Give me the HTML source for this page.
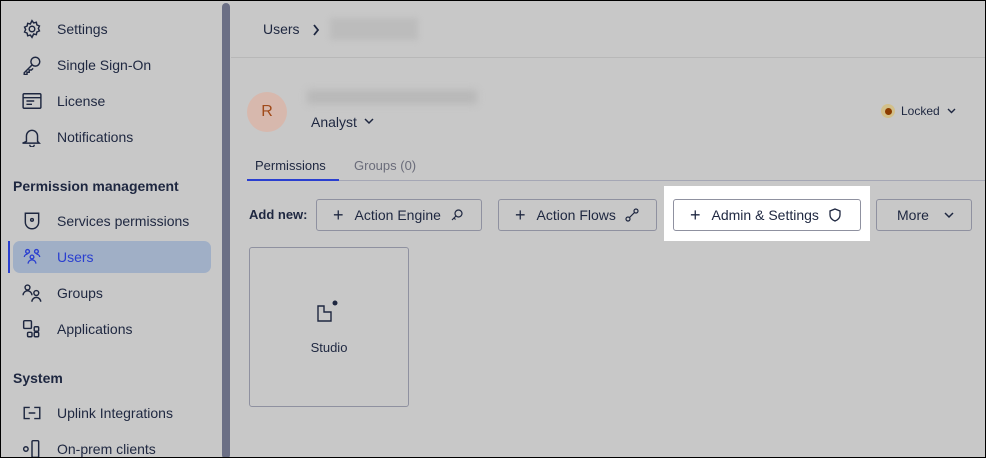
<!DOCTYPE html>
<html><head><style>
*{box-sizing:border-box;margin:0;padding:0}
body{width:986px;height:458px;background:#000;font-family:"Liberation Sans",sans-serif;color:#1e2740;overflow:hidden;position:relative}
.frame{position:absolute;left:1px;top:1px;width:984px;height:456px;background:#c8c8c8;overflow:hidden}
.side{position:absolute;left:0;top:0;width:221px;height:456px}
.item{position:absolute;left:12px;width:198px;height:32px;display:flex;align-items:center;font-size:14px;color:#1e2740}
.item svg{position:absolute;left:9px;top:6px}
.item span{position:absolute;left:44px}
.sec{position:absolute;left:12px;font-size:14px;font-weight:bold;color:#1e2740}
.scroll{position:absolute;left:221px;top:2px;width:8px;height:456px;background:#6b6f85;border-radius:4px}
.hdr{position:absolute;left:230px;top:0;right:0;height:57px;border-bottom:1px solid #b8b8b8}
.btn{position:absolute;top:198px;height:32px;border:1px solid #8f91a0;border-radius:3px;font-size:14px;display:flex;align-items:center;color:#1e2740}
</style></head><body><div class="frame">
<div class="side">
<div class="item" style="top:12px"><svg width="20" height="20" viewBox="0 0 18 18" fill="none" stroke="#1e2740" stroke-width="1.3"><circle cx="9" cy="9" r="2.5"/><path d="M9 1.5l1.5 2 2.4-.6.5 2.4 2.3 1-1 2.2 1 2.2-2.3 1-.5 2.4-2.4-.6L9 16.5l-1.5-2-2.4.6-.5-2.4-2.3-1 1-2.2-1-2.2 2.3-1 .5-2.4 2.4.6z"/></svg><span>Settings</span></div>
<div class="item" style="top:48px"><svg width="20" height="20" viewBox="0 0 18 18" fill="none" stroke="#1e2740" stroke-width="1.3"><circle cx="12" cy="6" r="4"/><path d="M9 9l-7 7v1.5h2.5v-2h2v-2h2l1.5-1.5"/></svg><span>Single Sign-On</span></div>
<div class="item" style="top:84px"><svg width="20" height="20" viewBox="0 0 18 18" fill="none" stroke="#1e2740" stroke-width="1.3"><rect x="1" y="2.5" width="16" height="13" rx="1"/><path d="M1 6h16M4 9h7M4 12h5"/></svg><span>License</span></div>
<div class="item" style="top:120px"><svg width="20" height="20" viewBox="0 0 18 18" fill="none" stroke="#1e2740" stroke-width="1.3"><path d="M4 13V8a5 5 0 0110 0v5l1.5 1.5h-15zM7 16a2 2 0 004 0"/></svg><span>Notifications</span></div>
<div class="sec" style="top:177px">Permission management</div>
<div class="item" style="top:204px"><svg width="20" height="20" viewBox="0 0 18 18" fill="none" stroke="#1e2740" stroke-width="1.3"><path d="M3 2h12v8a6 6 0 01-12 0z"/><circle cx="9" cy="8" r="1.2"/></svg><span>Services permissions</span></div>
<div style="position:absolute;left:7px;top:240px;width:2px;height:32px;background:#2a3fd0"></div>
<div class="item" style="top:240px;background:#a0afc6;border-radius:7px;color:#2a3fd0"><svg width="20" height="20" viewBox="0 0 18 18" fill="none" stroke="#2a3fd0" stroke-width="1.2"><circle cx="5" cy="4" r="1.7"/><circle cx="13" cy="4" r="1.7"/><circle cx="9" cy="9" r="1.7"/><path d="M2 9a3 3 0 013-2.5M16 9a3 3 0 00-3-2.5M5.5 15a3.5 3.5 0 017 0"/></svg><span>Users</span></div>
<div class="item" style="top:276px"><svg width="22" height="20" viewBox="0 0 20 18" fill="none" stroke="#1e2740" stroke-width="1.3"><circle cx="5" cy="4" r="2.2"/><circle cx="13" cy="9" r="2.2"/><path d="M1 11a4 4 0 018 0M9 17a4 4 0 018 0"/></svg><span>Groups</span></div>
<div class="item" style="top:312px"><svg width="20" height="20" viewBox="0 0 18 18" fill="none" stroke="#1e2740" stroke-width="1.3"><rect x="1.5" y="1.5" width="7" height="7" rx="1"/><rect x="11" y="7" width="4" height="4" rx="1"/><rect x="5" y="12" width="4" height="4" rx="1"/><rect x="11" y="12" width="4" height="4" rx="1"/></svg><span>Applications</span></div>
<div class="sec" style="top:369px">System</div>
<div class="item" style="top:396px"><svg width="20" height="20" viewBox="0 0 18 18" fill="none" stroke="#1e2740" stroke-width="1.3"><path d="M7 4H2v10h5M11 4h5v10h-5M6 9h6"/></svg><span>Uplink Integrations</span></div>
<div class="item" style="top:432px"><svg width="20" height="20" viewBox="0 0 18 18" fill="none" stroke="#1e2740" stroke-width="1.3"><circle cx="3.5" cy="9" r="2"/><rect x="9" y="1.5" width="6" height="15" rx="1"/></svg><span>On-prem clients</span></div>
</div>
<div class="scroll"></div>
<div class="hdr"><span style="position:absolute;left:32px;top:20px;font-size:14px">Users</span><svg style="position:absolute;left:81px;top:23px" width="8" height="12" viewBox="0 0 8 12" fill="none" stroke="#1e2740" stroke-width="1.8"><path d="M2 1l4 5-4 5"/></svg><div style="position:absolute;left:99px;top:17px;width:88px;height:22px;background:#bcbcbc;filter:blur(3px)"></div></div>
<div style="position:absolute;left:246px;top:91px;width:40px;height:40px;border-radius:50%;background:#d7b8ad;color:#a04a1a;font-size:16px;display:flex;align-items:center;justify-content:center">R</div>
<div style="position:absolute;left:306px;top:89px;width:170px;height:14px;background:#b8b8b8;filter:blur(4px)"></div>
<div style="position:absolute;left:310px;top:113px;font-size:14px">Analyst</div>
<svg style="position:absolute;left:363px;top:117px" width="10" height="7" viewBox="0 0 10 7" fill="none" stroke="#1e2740" stroke-width="1.5"><path d="M1 1l4 4 4-4"/></svg>
<div style="position:absolute;left:880px;top:103px;width:14px;height:14px;border-radius:50%;background:#d2c08a"></div>
<div style="position:absolute;left:884px;top:107px;width:7px;height:7px;border-radius:50%;background:#8c3c00"></div>
<div style="position:absolute;left:900px;top:103px;font-size:12px">Locked</div>
<svg style="position:absolute;left:946px;top:107px" width="9" height="6" viewBox="0 0 9 6" fill="none" stroke="#1e2740" stroke-width="1.4"><path d="M1 1l3.5 3.5L8 1"/></svg>
<div style="position:absolute;left:254px;top:157px;font-size:13px">Permissions</div>
<div style="position:absolute;left:353px;top:157px;font-size:13px;color:#6a6c7a">Groups (0)</div>
<div style="position:absolute;left:246px;top:179px;width:738px;height:1px;background:#a5a7b5"></div>
<div style="position:absolute;left:246px;top:178px;width:92px;height:2px;background:#2a3fd0"></div>
<div style="position:absolute;left:248px;top:206px;font-size:13px;font-weight:bold">Add new:</div>
<div class="btn" style="left:315px;width:166px"><span style="margin-left:16px;font-size:18px">+</span><span style="margin-left:11px">Action Engine</span><svg style="margin-left:9px" width="14" height="14" viewBox="0 0 14 14" fill="none" stroke="#1e2740" stroke-width="1.2"><circle cx="8.5" cy="5.5" r="3.5"/><path d="M6 8l-4 4M4 10l1.5 1.5"/></svg></div>
<div class="btn" style="left:497px;width:159px"><span style="margin-left:16px;font-size:18px">+</span><span style="margin-left:11px">Action Flows</span><svg style="margin-left:9px" width="14" height="14" viewBox="0 0 14 14" fill="none" stroke="#1e2740" stroke-width="1.2"><circle cx="3" cy="11" r="2"/><circle cx="11" cy="3" r="2"/><path d="M4.5 9.5l5-5"/></svg></div>
<div style="position:absolute;left:663px;top:185px;width:206px;height:55px;background:#fff"></div>
<div class="btn" style="left:672px;width:188px;background:#fff"><span style="margin-left:16px;font-size:18px">+</span><span style="margin-left:11px">Admin &amp; Settings</span><svg style="margin-left:10px" width="12" height="14" viewBox="0 0 12 14" fill="none" stroke="#1e2740" stroke-width="1.3"><path d="M6 1l5 2v4c0 3-2.5 5-5 6-2.5-1-5-3-5-6V3z"/></svg></div>
<div class="btn" style="left:875px;width:96px"><span style="margin-left:20px">More</span><svg style="margin-left:15px" width="10" height="7" viewBox="0 0 10 7" fill="none" stroke="#1e2740" stroke-width="1.5"><path d="M1 1l4 4 4-4"/></svg></div>
<div style="position:absolute;left:248px;top:246px;width:160px;height:160px;border:1px solid #8f91a0;border-radius:3px"></div>
<svg style="position:absolute;left:315px;top:299px" width="24" height="24" viewBox="0 0 24 24" fill="none" stroke="#1e2740" stroke-width="1.4"><path d="M2 6h6v6h7v9H2z"/><circle cx="19" cy="3" r="2.5" fill="#1e2740" stroke="none"/></svg>
<div style="position:absolute;left:248px;top:339px;width:160px;text-align:center;font-size:13px">Studio</div>
</div></body></html>
